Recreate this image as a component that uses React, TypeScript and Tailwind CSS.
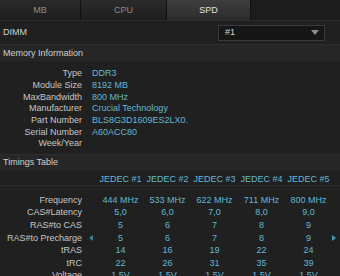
const info: Array<[string, string]> = [
  ['Type', 'DDR3'],
  ['Module Size', '8192 MB'],
  ['MaxBandwidth', '800 MHz'],
  ['Manufacturer', 'Crucial Technology'],
  ['Part Number', 'BLS8G3D1609ES2LX0.'],
  ['Serial Number', 'A60ACC80'],
  ['Week/Year', ''],
];

const timings: Array<[string, string[]]> = [
  ['Frequency', ['444 MHz', '533 MHz', '622 MHz', '711 MHz', '800 MHz']],
  ['CAS#Latency', ['5,0', '6,0', '7,0', '8,0', '9,0']],
  ['RAS#to CAS', ['5', '6', '7', '8', '9']],
  ['RAS#to Precharge', ['5', '6', '7', '8', '9']],
  ['tRAS', ['14', '16', '19', '22', '24']],
  ['tRC', ['22', '26', '31', '35', '39']],
  ['Voltage', ['1.5V', '1.5V', '1.5V', '1.5V', '1.5V']],
];

function Tab({ label, active, w }: { label: string; active?: boolean; w: string }) {
  return (
    <div
      className={[
        'flex h-full items-center justify-center border-r border-[#111]',
        w,
        active
          ? 'bg-gradient-to-b from-[#3e3e3e] to-[#2c2c2c] text-[#e0e0e0]'
          : 'bg-gradient-to-b from-[#2b2b2b] to-[#1e1e1e] text-[#8c8c8c]',
      ].join(' ')}
    >
      {label}
    </div>
  );
}

function SectionHeader({ title }: { title: string }) {
  return (
    <div className="flex h-[17px] items-center border-t border-[#2e2e2e] bg-[#262626] px-[3px] text-[#cfcfcf]">
      {title}
    </div>
  );
}

export default function App() {
  return (
    <div
      className="h-[276px] w-[340px] overflow-hidden bg-[#202020] text-[9px] leading-none text-[#c6c6c6]"
      style={{ fontFamily: '"Liberation Sans", Arial, sans-serif' }}
    >
      {/* tabs */}
      <div className="flex h-[21px] border-b border-[#2d2d2d] bg-[#1c1c1c]">
        <Tab label="MB" w="w-[81px]" />
        <Tab label="CPU" w="w-[86px]" />
        <Tab label="SPD" w="w-[84px]" active />
      </div>

      {/* DIMM selector */}
      <div className="flex h-[23px] items-center justify-between pl-[3px] pr-[15px]">
        <span className="text-[#d0d0d0]">DIMM</span>
        <div className="flex h-[16px] w-[107px] items-center justify-between border border-[#3a3a3a] bg-[#161616] pl-[6px] pr-[5px] text-[#d8d8d8]">
          <span>#1</span>
          <svg width="8" height="5" viewBox="0 0 8 5">
            <path d="M0 0h8L4 5z" fill="#8e8e8e" />
          </svg>
        </div>
      </div>

      <SectionHeader title="Memory Information" />

      <div className="flex flex-col pt-[7px] pb-[4px]">
        {info.map(([k, v]) => (
          <div key={k} className="flex h-[11.7px] items-center">
            <span className="w-[82px] text-right text-[#c6c6c6]">{k}</span>
            <span className="pl-[10px] text-[#62b8d2]">{v}</span>
          </div>
        ))}
      </div>

      <SectionHeader title="Timings Table" />

      <div className="pt-[3px]">
        <div className="flex h-[12px] items-center border-b border-[#2b2b2b]">
          <span className="w-[97px]" />
          {[1, 2, 3, 4, 5].map((n) => (
            <span key={n} className="w-[47px] text-center text-[#62b8d2]">
              JEDEC #{n}
            </span>
          ))}
        </div>
        <div className="flex flex-col pt-[8px]">
          {timings.map(([k, vals], r) => (
            <div key={k} className="relative flex h-[12.65px] items-center">
              <span className="w-[82px] text-right text-[#c6c6c6]">{k}</span>
              <span className="flex w-[15px] items-center pl-[7px]">
                {r === 3 && (
                  <svg width="4" height="6" viewBox="0 0 4 6">
                    <path d="M4 0v6L0 3z" fill="#3f7f93" />
                  </svg>
                )}
              </span>
              {vals.map((v, i) => (
                <span key={i} className="w-[47px] text-center text-[#62b8d2]">
                  {v}
                </span>
              ))}
              {r === 3 && (
                <svg className="absolute left-[332px] top-[3px]" width="4" height="6" viewBox="0 0 4 6">
                  <path d="M0 0v6l4-3z" fill="#3f9ab8" />
                </svg>
              )}
            </div>
          ))}
        </div>
      </div>
    </div>
  );
}
